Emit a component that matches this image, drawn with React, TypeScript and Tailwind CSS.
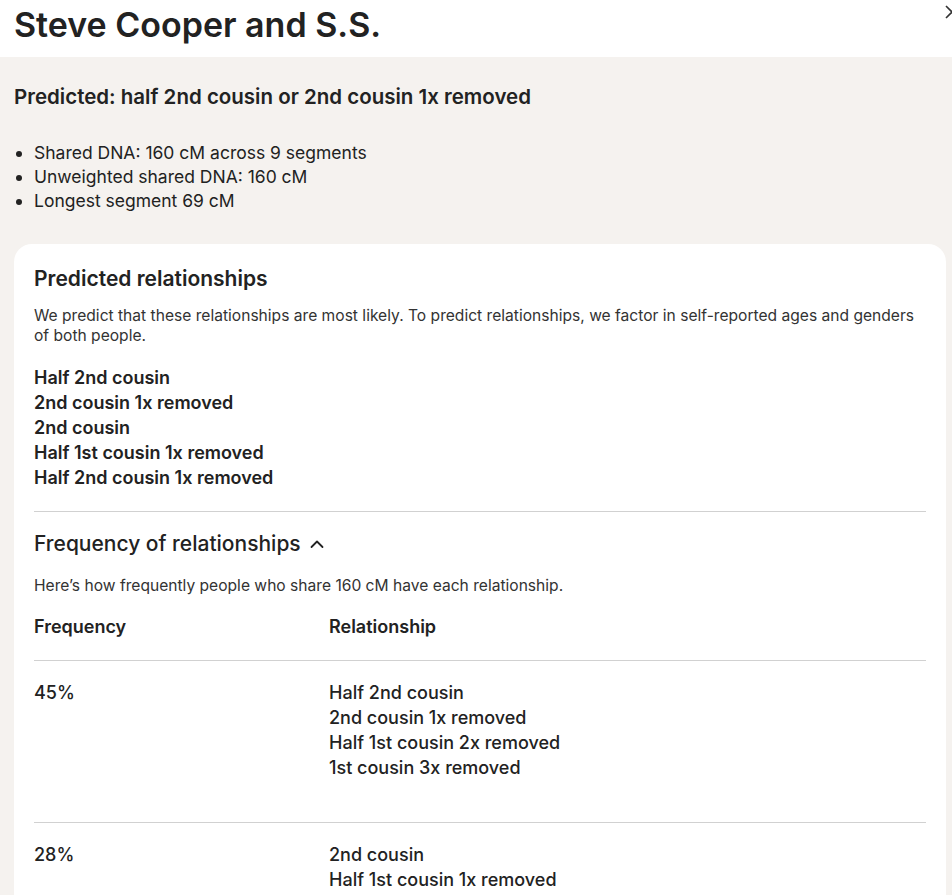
import React from "react";

const font = { fontFamily: "Inter, 'Liberation Sans', sans-serif" };

export default function App() {
  const predicted = [
    "Half 2nd cousin",
    "2nd cousin 1x removed",
    "2nd cousin",
    "Half 1st cousin 1x removed",
    "Half 2nd cousin 1x removed",
  ];
  const rows = [
    {
      pct: "45%",
      rels: [
        "Half 2nd cousin",
        "2nd cousin 1x removed",
        "Half 1st cousin 2x removed",
        "1st cousin 3x removed",
      ],
    },
    { pct: "28%", rels: ["2nd cousin", "Half 1st cousin 1x removed"] },
  ];
  return (
    <div className="w-[952px] h-[895px] overflow-hidden bg-[#f5f2ef] text-[#222222]" style={font}>
      <div className="relative h-[57px] bg-white px-[14px] pt-[3px]">
        <h1 className="text-[34px] font-semibold leading-[44px]">Steve Cooper and S.S.</h1>
        <svg className="absolute left-[944px] top-[4px]" width="16" height="16" viewBox="0 0 16 16" fill="none" stroke="#333" strokeWidth="1.6">
          <path d="M2 2l12 12M14 2L2 14" />
        </svg>
      </div>
      <div className="px-[14px] pt-[26px]">
        <h2 className="text-[20.5px] font-semibold leading-[28px]">Predicted: half 2nd cousin or 2nd cousin 1x removed</h2>
        <ul className="mt-[30px] list-disc pl-[20px] text-[17.5px] leading-[24px]">
          <li>Shared DNA: 160 cM across 9 segments</li>
          <li>Unweighted shared DNA: 160 cM</li>
          <li>Longest segment 69 cM</li>
        </ul>
        <div className="mt-[31px] mr-[-8px] rounded-[18px] bg-white px-[20px] pt-[21px] pb-[40px]">
          <h3 className="text-[21px] font-semibold leading-[28px]">Predicted relationships</h3>
          <p className="mt-[13px] text-[15.6px] leading-[20px] text-[#333]">
            We predict that these relationships are most likely. To predict relationships, we factor in self-reported ages and genders of both people.
          </p>
          <div className="mt-[19px] flex flex-col text-[18px] font-semibold leading-[25px]">
            {predicted.map((p) => (
              <div key={p}>{p}</div>
            ))}
          </div>
          <div className="mt-[21px] border-t border-[#d1d1d1]" />
          <div className="mt-[18px] flex items-center gap-[8px]">
            <span className="text-[21px] font-medium leading-[28px]">Frequency of relationships</span>
            <svg width="16" height="16" viewBox="0 0 16 16" fill="none" stroke="#222" strokeWidth="1.8" strokeLinecap="round" strokeLinejoin="round">
              <path d="M2.5 11L8 5.5L13.5 11" />
            </svg>
          </div>
          <p className="mt-[18px] text-[15.6px] leading-[20px] text-[#333]">
            Here’s how frequently people who share 160 cM have each relationship.
          </p>
          <div className="mt-[19px] grid grid-cols-[295px_1fr] pb-[21px] text-[18px] font-semibold leading-[24px]">
            <div>Frequency</div>
            <div>Relationship</div>
          </div>
          {rows.map((r) => (
            <div key={r.pct} className="grid grid-cols-[295px_1fr] border-t border-[#d1d1d1] pt-[19px] pb-[42px] text-[18px] leading-[25px]">
              <div className="font-medium">{r.pct}</div>
              <div className="flex flex-col font-medium">
                {r.rels.map((x) => (
                  <div key={x}>{x}</div>
                ))}
              </div>
            </div>
          ))}
        </div>
      </div>
    </div>
  );
}
